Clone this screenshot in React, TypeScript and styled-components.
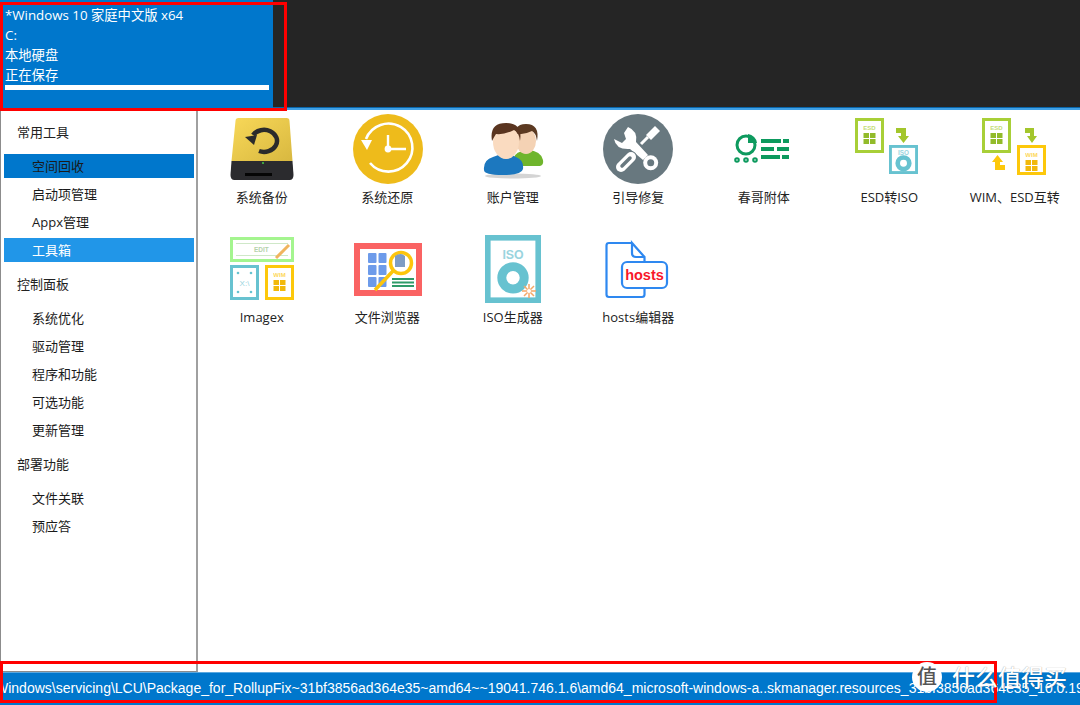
import React from 'react';
import styled, { createGlobalStyle } from 'styled-components';

const Global = createGlobalStyle`
  html, body { margin: 0; padding: 0; background: #fff; }
  body { font-family: "Open Sans", "Noto Sans CJK SC", sans-serif; }
  * { box-sizing: border-box; }
`;

const Page = styled.div`
  position: relative;
  width: 1080px;
  height: 705px;
  overflow: hidden;
  display: flex;
  flex-direction: column;
  background: #fff;
`;

const Header = styled.header`
  height: 110px;
  flex: none;
  background: #252525;
  border-bottom: 2px solid #3fa0e6;
  box-shadow: inset 0 -1px #0a66aa;
  display: flex;
`;

const DiskPanel = styled.div`
  width: 273px;
  height: 108px;
  background: #0077cc;
  color: #fff;
  padding: 5px 5px 0;
  font-size: 13.3px;
`;

const DiskLine = styled.div`
  height: 20px;
  line-height: 20px;
  white-space: nowrap;
`;

const Progress = styled.div`
  height: 5px;
  width: 264px;
  background: #fff;
`;

const Body = styled.div`
  flex: 1;
  display: flex;
  min-height: 0;
`;

const Sidebar = styled.nav`
  width: 198px;
  flex: none;
  border-left: 1px solid #8c8c8c;
  border-right: 2px solid #a0a0a0;
  border-bottom: 1px solid #8c8c8c;
  padding: 8px 3px 0;
`;

const GroupTitle = styled.div`
  height: 28px;
  line-height: 28px;
  padding-left: 13px;
  font-size: 13px;
  color: #222;
`;

const Group = styled.div`
  display: flex;
  flex-direction: column;
  gap: 4px;
  margin: 8px 0;
`;

const NavItem = styled.div<{ $state?: 'current' | 'hover' }>`
  height: 24px;
  line-height: 24px;
  width: 190px;
  padding-left: 28px;
  font-size: 13px;
  background: ${({ $state }) =>
    $state === 'current' ? '#0077cc' : $state === 'hover' ? '#2196e8' : 'transparent'};
  color: ${({ $state }) => ($state === 'hover' ? '#fff' : '#1a1a1a')};
`;

const Tools = styled.main`
  flex: 1;
  display: grid;
  grid-template-columns: repeat(7, 125.5px);
  grid-auto-rows: 120px;
  padding: 3px 0 0 0;
  margin-left: 1px;
`;

const Tool = styled.div`
  display: flex;
  flex-direction: column;
  align-items: center;
`;

const ToolIcon = styled.svg`
  width: 72px;
  height: 72px;
  flex: none;
`;

const ToolLabel = styled.div`
  margin-top: 4px;
  font-size: 13px;
  line-height: 16px;
  color: #222;
  white-space: nowrap;
`;

const StatusBar = styled.footer`
  height: 33px;
  flex: none;
  background: #0077cc;
  border-top: 1px solid #5aa8e0;
  color: #fff;
  font-family: "Liberation Sans", "Noto Sans CJK SC", sans-serif;
  font-size: 14px;
  line-height: 31px;
  white-space: nowrap;
  overflow: hidden;
  text-indent: -5px;
`;

const Marker = styled.div<{ $x: number; $y: number; $w: number; $h: number }>`
  position: absolute;
  left: ${({ $x }) => $x}px;
  top: ${({ $y }) => $y}px;
  width: ${({ $w }) => $w}px;
  height: ${({ $h }) => $h}px;
  border: 3px solid #f00;
  pointer-events: none;
`;

const Watermark = styled.div`
  position: absolute;
  left: 912px;
  top: 662px;
  display: flex;
  align-items: center;
  gap: 10px;
  color: #fff;
  font-size: 23px;
  font-weight: 500;
  line-height: 30px;
  white-space: nowrap;
  text-shadow: 0 0 1px rgba(0, 0, 0, 0.45);
`;

const WatermarkBadge = styled.div`
  flex: none;
  width: 30px;
  height: 30px;
  border-radius: 50%;
  background: #fff;
  color: #555;
  font-size: 20px;
  line-height: 30px;
  text-align: center;
  text-shadow: none;
`;

const Backup = () => (
  <ToolIcon viewBox="0 0 72 72">
    <defs>
      <linearGradient id="bk" x1="0" x2="1" y1="0" y2="1">
        <stop offset="0" stopColor="#f8d858" />
        <stop offset="1" stopColor="#d8b840" />
      </linearGradient>
    </defs>
    <path d="M9.500 8q0-3 3-3h48q3 0 3 3l3 40H5.500z" fill="url(#bk)" />
    <path d="M5.500 48h61l1 14q0 5-4 5H8.500q-4 0-4-5z" fill="#2b2b2e" />
    <rect x="19" y="60" width="27" height="3" fill="#050505" />
    <circle cx="37" cy="50" r="1" fill="#4c4" />
    <path d="M27 22A13 11 0 1 1 33 38" fill="none" stroke="#2b2b2b" strokeWidth="4.500" />
    <path d="M19 24l12-2-3 10z" fill="#2b2b2b" />
  </ToolIcon>
);

const Restore = () => (
  <ToolIcon viewBox="0 0 72 72">
    <circle cx="37" cy="36" r="35" fill="#eebb1b" />
    <path d="M15 26A24 24 0 1 1 19 50" fill="none" stroke="#fff" strokeWidth="2.600" />
    <path d="M10 27h11l-5 10z" fill="#fff" />
    <path d="M37 22v14h18" fill="none" stroke="#fff" strokeWidth="2.400" />
    <circle cx="37" cy="36" r="3.400" fill="#fff" />
  </ToolIcon>
);

const Users = () => (
  <ToolIcon viewBox="0 0 72 72">
    <ellipse cx="36" cy="63" rx="28" ry="2.500" fill="#aaa" opacity=".5" />
    <path d="M36 46q2-8 15-9 13 1 15 10 1 5-3 6H38z" fill="#6fb52c" />
    <ellipse cx="49" cy="28" rx="10" ry="13" fill="#f4d2b4" />
    <path d="M38 28q-3-17 11-17t11 17q-1-8-5-10-8 4-15 3-1 3-2 7z" fill="#5c3a22" />
    <path d="M7 57q-1-10 9-13 5-2 9-3h6q4 1 8 3 8 3 7 12-1 6-20 6T7 57z" fill="#1c78bf" />
    <path d="M21 42q8 7 16 0l-2-5H23z" fill="#cfe3ee" />
    <ellipse cx="29" cy="29" rx="13" ry="17" fill="#fadbc0" />
    <path d="M15 28q-3-18 14-18t14 18q-1-9-6-11-10 5-18 4-2 3-4 7z" fill="#5a3520" />
  </ToolIcon>
);

const Repair = () => (
  <ToolIcon viewBox="0 0 72 72">
    <circle cx="36" cy="36" r="35" fill="#68787f" />
    <path d="M26 14Q36 18 34 29L46 42 41 47 28 36Q14 37 12 26L20 30 24 26 22 20z" fill="#fff" />
    <circle cx="48.700" cy="49.700" r="7.500" fill="#fff" />
    <circle cx="48.700" cy="49.700" r="3.500" fill="#68787f" />
    <path d="M39 31l7-7" stroke="#fff" strokeWidth="3" />
    <path d="M44 22l9-9 5 5-9 9z" fill="#fff" />
    <path d="M29 44L19 54" stroke="#68787f" strokeWidth="12" strokeLinecap="round" />
    <path d="M29 44L19 54" stroke="#fff" strokeWidth="10" strokeLinecap="round" />
    <path d="M28 45L20 53" stroke="#68787f" strokeWidth="3.500" strokeLinecap="round" />
  </ToolIcon>
);

const Spring = () => (
  <ToolIcon viewBox="0 0 72 72">
    <circle cx="18" cy="32" r="9" fill="none" stroke="#0d9a5e" strokeWidth="3" />
    <path d="M20 21a10 10 0 0 1 9 9h-9z" fill="#0d9a5e" />
    <g fill="none" stroke="#0d9a5e" strokeWidth="2">
      <circle cx="9" cy="47" r="1.800" />
      <circle cx="18" cy="47" r="1.800" />
      <circle cx="27" cy="47" r="1.800" />
    </g>
    <path d="M33 26h20v4H33zM55 26h6v4h-6zM33 34h13v4H33zM49 34h12v4H49zM33 42h19v4H33zM54 42h7v4h-7z" fill="#0d9a5e" />
  </ToolIcon>
);

const Doc = ({ x, y, color, label, w = 29, h = 35, pane }: { x: number; y: number; color: string; label: string; w?: number; h?: number; pane: string }) => (
  <g>
    <rect x={x + 1.5} y={y + 1.5} width={w - 3} height={h - 3} fill="#fff" stroke={color} strokeWidth="3" />
    <text x={x + w / 2} y={y + 11.5} fontSize="6" fontWeight="bold" textAnchor="middle" fill={color} opacity=".7" fontFamily="Liberation Sans">{label}</text>
    <rect x={x + w / 2 - 6} y={y + 15} width="5.500" height="5" fill={pane} />
    <rect x={x + w / 2 + 0.5} y={y + 15} width="5.500" height="5" fill={pane} />
    <rect x={x + w / 2 - 6} y={y + 21} width="5.500" height="5" fill={pane} />
    <rect x={x + w / 2 + 0.5} y={y + 21} width="5.500" height="5" fill={pane} />
  </g>
);

const Disc = ({ x, y, w, h }: { x: number; y: number; w: number; h: number }) => (
  <g>
    <rect x={x + w * 0.05} y={y + w * 0.05} width={w * 0.9} height={h - w * 0.1} fill="#fff" stroke="#67c2d0" strokeWidth={w * 0.1} />
    <text x={x + w / 2} y={y + h * 0.35} fontSize={w * 0.22} fontWeight="bold" textAnchor="middle" fill="#9ad4de" fontFamily="Liberation Sans">ISO</text>
    <circle cx={x + w / 2} cy={y + h * 0.63} r={w * 0.2} fill="none" stroke="#67c2d0" strokeWidth={w * 0.16} />
  </g>
);

const EsdIso = () => (
  <ToolIcon viewBox="0 0 72 72">
    <Doc x={2} y={5} w={29} h={35} color="#a8cf38" label="ESD" pane="#92bb2a" />
    <path d="M43 15h10v8h3l-5.500 7-5.500-7h3v-3h-5z" fill="#a3c62c" />
    <Disc x={36} y={32} w={29} h={29} />
  </ToolIcon>
);

const WimEsd = () => (
  <ToolIcon viewBox="0 0 72 72">
    <Doc x={3} y={5} w={29} h={35} color="#a8cf38" label="ESD" pane="#92bb2a" />
    <path d="M46 15h9v8h3l-5 7-5-7h3v-3h-5z" fill="#a3c62c" />
    <path d="M13 49l5.500-7 5.500 7h-3v3h5v5H16v-8z" fill="#fdc80b" />
    <Doc x={38} y={32} w={29} h={30} color="#fdc80b" label="WIM" pane="#f2b90a" />
  </ToolIcon>
);

const Imagex = () => (
  <ToolIcon viewBox="0 0 72 72">
    <rect x="5.500" y="5.500" width="61" height="22" fill="#fff" stroke="#a4f58f" strokeWidth="3" />
    <path d="M10 10.500h52M10 22.500h52" stroke="#cfe8c8" />
    <text x="28" y="19" fontSize="6.500" fill="#b5d2ab" fontFamily="Liberation Sans" fontWeight="bold">EDIT</text>
    <path d="M50 25l13-13" stroke="#f0b45e" strokeWidth="3" />
    <rect x="5.500" y="33.500" width="26" height="32" fill="#fff" stroke="#67c2d0" strokeWidth="3" />
    <text x="18.500" y="53" fontSize="8" textAnchor="middle" fill="#9ad4de" fontFamily="Liberation Sans">X:\</text>
    <circle cx="12" cy="40" r="1.300" fill="#67c2d0" /><circle cx="25" cy="40" r="1.300" fill="#67c2d0" />
    <circle cx="12" cy="59" r="1.300" fill="#67c2d0" /><circle cx="25" cy="59" r="1.300" fill="#67c2d0" />
    <Doc x={39} y={32} w={29} h={35} color="#fdc80b" label="WIM" pane="#f2b90a" />
  </ToolIcon>
);

const Browser = () => (
  <ToolIcon viewBox="0 0 72 72">
    <rect x="6" y="13" width="62" height="47" fill="#fff" stroke="#fa6363" strokeWidth="6" />
    <g fill="#6d9bea">
      <rect x="17" y="20" width="8.500" height="10" rx="1" /><rect x="27.500" y="20" width="8" height="10" rx="1" />
      <rect x="17" y="32" width="8.500" height="10" rx="1" /><rect x="27.500" y="32" width="8" height="10" rx="1" />
      <rect x="17" y="44" width="8.500" height="10" rx="1" /><rect x="27.500" y="44" width="8" height="10" rx="1" />
    </g>
    <circle cx="50" cy="30" r="10.500" fill="#fff" stroke="#fdc50c" strokeWidth="3.500" />
    <path d="M44 23q6-4 10 0v11H44z" fill="#7e9cc4" />
    <path d="M42 38L24 57" stroke="#fdc50c" strokeWidth="3.500" />
    <path d="M41 46h22M41 49.500h22M41 53h22" stroke="#2e9b69" strokeWidth="2" />
  </ToolIcon>
);

const IsoMaker = () => (
  <ToolIcon viewBox="0 0 72 72">
    <Disc x={8} y={2} w={56} h={68} />
    <g stroke="#f4a868" strokeWidth="1.500">
      <path d="M52 51v14M45 58h14M47 53l10 10M57 53l-10 10" />
    </g>
    <circle cx="52" cy="58" r="2" fill="#fff" />
  </ToolIcon>
);

const Hosts = () => (
  <ToolIcon viewBox="0 0 72 72">
    <path d="M30 10H7q-2.500 0-2.500 2.500v49q0 2.500 2.500 2.500h33q2.500 0 2.500-2.500V55M42.500 29v-5L30 10v10q0 4 4 4h8.500" fill="#fff" stroke="#2e88f0" strokeWidth="2.200" />
    <rect x="20" y="29" width="45" height="26" rx="5" fill="#fff" stroke="#2e88f0" strokeWidth="2.200" />
    <text x="42.500" y="47" fontSize="14.500" fontWeight="bold" textAnchor="middle" fill="#f8172a" fontFamily="Liberation Sans">hosts</text>
  </ToolIcon>
);

const tools: { label: string; icon: React.ReactNode }[] = [
  { label: '系统备份', icon: <Backup /> },
  { label: '系统还原', icon: <Restore /> },
  { label: '账户管理', icon: <Users /> },
  { label: '引导修复', icon: <Repair /> },
  { label: '春哥附体', icon: <Spring /> },
  { label: 'ESD转ISO', icon: <EsdIso /> },
  { label: 'WIM、ESD互转', icon: <WimEsd /> },
  { label: 'Imagex', icon: <Imagex /> },
  { label: '文件浏览器', icon: <Browser /> },
  { label: 'ISO生成器', icon: <IsoMaker /> },
  { label: 'hosts编辑器', icon: <Hosts /> },
];

const App = () => (
  <Page>
    <Global />
    <Header>
      <DiskPanel>
        <DiskLine>*Windows 10 家庭中文版 x64</DiskLine>
        <DiskLine>C:</DiskLine>
        <DiskLine>本地硬盘</DiskLine>
        <DiskLine>正在保存</DiskLine>
        <Progress />
      </DiskPanel>
    </Header>
    <Body>
      <Sidebar>
        <GroupTitle>常用工具</GroupTitle>
        <Group>
          <NavItem $state="current">空间回收</NavItem>
          <NavItem>启动项管理</NavItem>
          <NavItem>Appx管理</NavItem>
          <NavItem $state="hover">工具箱</NavItem>
        </Group>
        <GroupTitle>控制面板</GroupTitle>
        <Group>
          <NavItem>系统优化</NavItem>
          <NavItem>驱动管理</NavItem>
          <NavItem>程序和功能</NavItem>
          <NavItem>可选功能</NavItem>
          <NavItem>更新管理</NavItem>
        </Group>
        <GroupTitle>部署功能</GroupTitle>
        <Group>
          <NavItem>文件关联</NavItem>
          <NavItem>预应答</NavItem>
        </Group>
      </Sidebar>
      <Tools>
        {tools.map((tool) => (
          <Tool key={tool.label}>
            {tool.icon}
            <ToolLabel>{tool.label}</ToolLabel>
          </Tool>
        ))}
      </Tools>
    </Body>
    <StatusBar>Windows\servicing\LCU\Package_for_RollupFix~31bf3856ad364e35~amd64~~19041.746.1.6\amd64_microsoft-windows-a..skmanager.resources_31bf3856ad364e35_10.0.19041.1_zh-cn</StatusBar>
    <Marker $x={0} $y={2} $w={287} $h={109} />
    <Marker $x={0} $y={661} $w={997} $h={42} />
    <Watermark>
      <WatermarkBadge>值</WatermarkBadge>
      <span>什么值得买</span>
    </Watermark>
  </Page>
);

export default App;
